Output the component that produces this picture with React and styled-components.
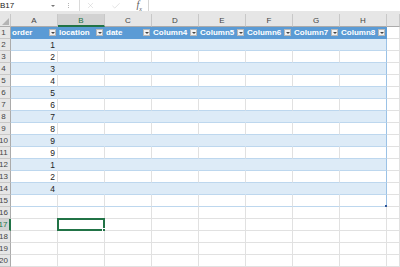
import styled, { createGlobalStyle } from 'styled-components';
import { X, Check } from 'lucide-react';

const GlobalStyle = createGlobalStyle`
  html, body {
    margin: 0;
    padding: 0;
    background: #fff;
    overflow: hidden;
  }
  body {
    font-family: 'Liberation Sans', Arial, sans-serif;
  }
`;

const Page = styled.div`
  width: 400px;
  height: 267px;
  overflow: hidden;
  display: flex;
  flex-direction: column;
  background: #fff;
`;

const FormulaBar = styled.div`
  display: flex;
  height: 11px;
  background: #fff;
`;

const NameBox = styled.div`
  width: 58px;
  box-sizing: border-box;
  padding-right: 3px;
  display: flex;
  align-items: center;
  justify-content: space-between;
  font-size: 8px;
  color: #222;
`;

const Caret = styled.span`
  width: 0;
  height: 0;
  border-left: 2px solid transparent;
  border-right: 2px solid transparent;
  border-top: 2px solid #777;
`;

const Grip = styled.div`
  width: 21px;
  display: flex;
  align-items: center;
  justify-content: center;

  &::before {
    content: '';
    width: 1px;
    height: 1px;
    background: #b5b5b5;
    box-shadow: 0 -2px 0 #b5b5b5, 0 2px 0 #b5b5b5;
  }
`;

const Tools = styled.div`
  width: 69px;
  box-sizing: border-box;
  border-left: 1px solid #dadada;
  display: flex;
  align-items: center;
  justify-content: space-between;
  padding: 0 6px 0 6px;
  color: #c6c6c6;
`;

const Fx = styled.span`
  font-family: 'Liberation Serif', 'Times New Roman', serif;
  font-style: italic;
  font-size: 10px;
  color: #5a5a5a;
  line-height: 1;

  sub {
    font-size: 6px;
  }
`;

const FormulaInput = styled.div`
  flex: 1;
  border-left: 1px solid #d4d4d4;
  background: #fff;
`;

const Strip = styled.div`
  height: 7px;
  background: #e6e6e6;
`;

const Grid = styled.div`
  display: grid;
  grid-template-columns: 11px repeat(8, 47px) 1fr;
  grid-template-rows: 13px;
  grid-auto-rows: 12px;
  font-size: 8px;
  color: #222;
`;

const Corner = styled.div`
  box-sizing: border-box;
  background: #e6e6e6;
  border-right: 1px solid #c8c8c8;
  border-bottom: 1px solid #ababab;
  display: flex;
  align-items: flex-end;
  justify-content: flex-end;
  padding: 0 1px 1px 0;
`;

const ColHead = styled.div`
  box-sizing: border-box;
  background: ${p => (p.$active ? '#d2d2d2' : '#e6e6e6')};
  color: ${p => (p.$active ? '#217346' : '#444')};
  border-right: 1px solid #c8c8c8;
  border-bottom: ${p => (p.$active ? '2px solid #217346' : '1px solid #ababab')};
  display: flex;
  align-items: center;
  justify-content: center;
  padding-top: ${p => (p.$active ? '1px' : '0')};
`;

const RowHead = styled.div`
  box-sizing: border-box;
  background: ${p => (p.$active ? '#d2d2d2' : '#e6e6e6')};
  color: ${p => (p.$active ? '#217346' : '#444')};
  border-right: ${p => (p.$active ? '2px solid #217346' : '1px solid #ababab')};
  border-bottom: 1px solid #c8c8c8;
  display: flex;
  align-items: center;
  justify-content: center;
  padding-right: 3px;
  white-space: nowrap;
`;

const HeadCell = styled.div`
  box-sizing: border-box;
  background: #5b9bd5;
  color: #fff;
  font-weight: bold;
  border-bottom: 1px solid #5b9bd5;
  display: flex;
  align-items: center;
  justify-content: space-between;
  padding: 0 2px 0 1px;
  white-space: nowrap;
`;

const FilterButton = styled.span`
  flex: none;
  width: 7px;
  height: 7px;
  box-sizing: border-box;
  background: #f2f2f2;
  border: 1px solid #b8b8b8;
  display: flex;
  align-items: center;
  justify-content: center;

  &::after {
    content: '';
    border-left: 2px solid transparent;
    border-right: 2px solid transparent;
    border-top: 2px solid #444;
  }
`;

const BodyCell = styled.div`
  position: relative;
  box-sizing: border-box;
  background: ${p => (p.$band ? '#ddebf7' : '#fff')};
  border-bottom: 1px solid #bdd7ee;
  border-right: 1px solid
    ${p => (p.$last ? '#9bc2e6' : p.$band ? '#ddebf7' : '#e1e1e1')};
  display: flex;
  align-items: center;
  justify-content: flex-end;
  padding-right: 2px;
  font-size: 8.5px;
`;

const PlainCell = styled.div`
  position: relative;
  box-sizing: border-box;
  background: #fff;
  border-right: 1px solid #e1e1e1;
  border-bottom: 1px solid #e1e1e1;
`;

const Selection = styled.div`
  position: absolute;
  top: -1px;
  left: -1px;
  right: -1px;
  bottom: -1px;
  border: 2px solid #217346;

  &::after {
    content: '';
    position: absolute;
    right: -3px;
    bottom: -3px;
    width: 4px;
    height: 4px;
    background: #217346;
    border: 1px solid #fff;
    box-sizing: border-box;
  }
`;

const ResizeHandle = styled.span`
  position: absolute;
  right: -2px;
  bottom: -2px;
  width: 3px;
  height: 3px;
  background: #2f5597;
`;

const columns = ['A', 'B', 'C', 'D', 'E', 'F', 'G', 'H'];
const headers = ['order', 'location', 'date', 'Column4', 'Column5', 'Column6', 'Column7', 'Column8'];
const orders = [1, 2, 3, 4, 5, 6, 7, 8, 9, 9, 1, 2, 4];
const rowCount = 20;
const tableEnd = 15;

export default function App() {
  const rows = [];
  for (let r = 1; r <= rowCount; r++) {
    const cells = [];
    for (let c = 0; c < 8; c++) {
      const key = `${r}-${c}`;
      if (r === 1) {
        cells.push(
          <HeadCell key={key}>
            <span>{headers[c]}</span>
            <FilterButton />
          </HeadCell>
        );
      } else if (r <= tableEnd) {
        cells.push(
          <BodyCell key={key} $band={r % 2 === 0} $last={c === 7}>
            {c === 0 ? orders[r - 2] : null}
            {r === tableEnd && c === 7 ? <ResizeHandle /> : null}
          </BodyCell>
        );
      } else {
        cells.push(
          <PlainCell key={key}>{r === 17 && c === 1 ? <Selection /> : null}</PlainCell>
        );
      }
    }
    rows.push(
      <RowHead key={`h${r}`} $active={r === 17}>{r}</RowHead>,
      ...cells,
      <PlainCell key={`i${r}`} />
    );
  }

  return (
    <Page>
      <GlobalStyle />
      <FormulaBar>
        <NameBox>
          <span>B17</span>
          <Caret />
        </NameBox>
        <Grip />
        <Tools>
          <X size={9} strokeWidth={1.2} />
          <Check size={10} strokeWidth={1.2} />
          <Fx>f<sub>x</sub></Fx>
        </Tools>
        <FormulaInput />
      </FormulaBar>
      <Strip />
      <Grid>
        <Corner>
          <svg width="7" height="7" viewBox="0 0 7 7">
            <polygon points="7,0 7,7 0,7" fill="#b4b4b4" />
          </svg>
        </Corner>
        {columns.map(col => (
          <ColHead key={col} $active={col === 'B'}>{col}</ColHead>
        ))}
        <ColHead />
        {rows}
      </Grid>
    </Page>
  );
}
